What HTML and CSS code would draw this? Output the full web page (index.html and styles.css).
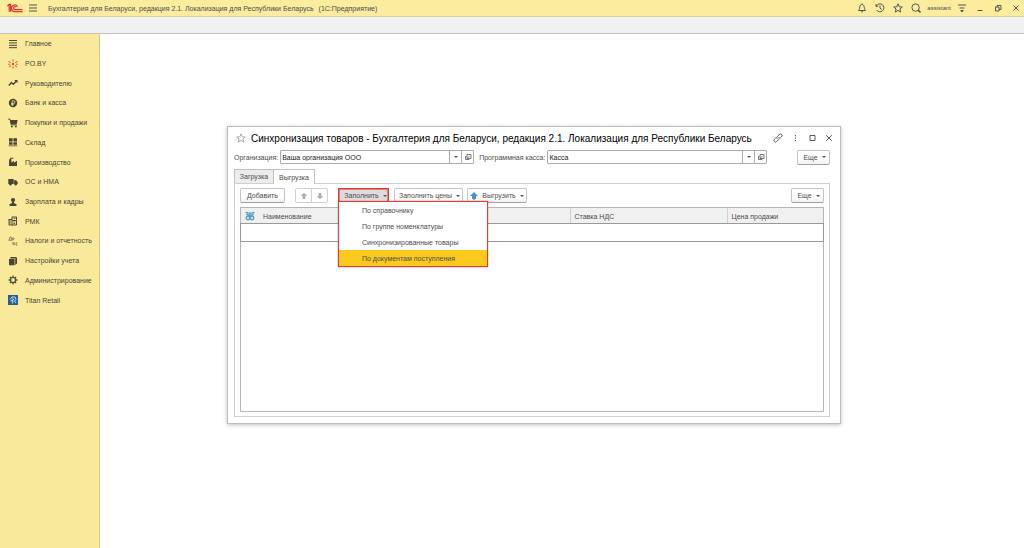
FILE: index.html
```html
<!DOCTYPE html>
<html lang="ru">
<head>
    <meta charset="utf-8">
    <title>Бухгалтерия для Беларуси</title>
    <link rel="stylesheet" href="styles.css">
</head>
<body>
    <header class="topbar">
        <svg class="logo" viewBox="0 0 16 10" fill="none" stroke="#e0352f" stroke-width="1.2">
            <path d="M0.4 3L2.2 1.4H3.6V8.8M2.2 1.8V8.8"/>
            <path d="M10.6 3.6A3.3 3.3 0 1 0 8 8.6H15.6"/>
            <path d="M9.2 4.2A1.5 1.5 0 1 0 8 6.6H15.6"/>
        </svg>
        <button class="icon-btn menu-btn" aria-label="Меню">
            <svg viewBox="0 0 10 10"><path d="M1 2h8M1 5h8M1 8h8"/></svg>
        </button>
        <span class="app-title">Бухгалтерия для Беларуси, редакция 2.1. Локализация для Республики Беларусь</span>
        <span class="app-name">(1С:Предприятие)</span>
        <div class="top-tools">
            <button class="icon-btn" aria-label="Уведомления">
                <svg viewBox="0 0 10 10"><path d="M1.5 7.5C3 6 2.5 4.5 3 3.2C3.3 2 4 1.5 5 1.5S6.7 2 7 3.2C7.5 4.5 7 6 8.5 7.5ZM4 8.8h2M5 .5v1"/></svg>
            </button>
            <button class="icon-btn" aria-label="История">
                <svg viewBox="0 0 10 10"><path d="M1.3 3A4 4 0 1 1 1.5 7M1 1v2.3h2.2M5 2.5V5.2L6.8 6.5"/></svg>
            </button>
            <button class="icon-btn" aria-label="Избранное">
                <svg viewBox="0 0 10 10"><path d="M5 .8L6.2 3.8L9.3 4L6.9 6L7.7 9.1L5 7.4L2.3 9.1L3.1 6L.7 4L3.8 3.8Z"/></svg>
            </button>
            <button class="icon-btn" aria-label="Поиск">
                <svg viewBox="0 0 10 10"><circle cx="4.6" cy="4.6" r="3.7"/><path d="M7 7l2.5 2.5" stroke-width="1.6"/></svg>
            </button>
            <span class="user">assistant</span>
            <button class="icon-btn" aria-label="Настройки">
                <svg viewBox="0 0 10 10"><path d="M1 2h8M2.5 5h5"/><path d="M3.8 7.5h2.4L5 9Z" fill="#444"/></svg>
            </button>
            <button class="icon-btn" aria-label="Свернуть">
                <svg viewBox="0 0 10 10"><path d="M2.5 7.5h5"/></svg>
            </button>
            <button class="icon-btn" aria-label="Восстановить">
                <svg viewBox="0 0 10 10"><path d="M2.5 4h3.5v4h-3.5zM4 4V2.5h4V6.500h-2"/></svg>
            </button>
            <button class="icon-btn" aria-label="Закрыть">
                <svg viewBox="0 0 10 10"><path d="M2.5 2.5l5 5M7.5 2.5l-5 5"/></svg>
            </button>
        </div>
    </header>
    <div class="open-tabs"></div>
    <div class="workspace">
        <nav class="sidebar">
            <div class="sections">
                <a href="#"><svg viewBox="0 0 10 10"><path d="M1 1.5h8M1 3.9h8M1 6.3h8M1 8.7h8" stroke="#4a4433"/></svg>Главное</a>
                <a href="#"><svg viewBox="0 0 10 10"><path d="M5 .5v2M5 7.5v2M.5 2.5l2.2 1M9.5 2.5l-2.2 1M1 8l2-1.5M9 8l-2-1.5M.3 5.2h1.7M8 5.2h1.7" stroke="#e2452f"/><circle cx="5" cy="5" r="1.2" fill="#e2452f"/></svg>PO.BY</a>
                <a href="#"><svg viewBox="0 0 10 10"><path d="M.8 7.5L3.5 4.6L5.3 6.3L8.5 3" stroke="#4a4433" stroke-width="1.4"/><path d="M6.3 2h3.2v3.2z" fill="#4a4433"/></svg>Руководителю</a>
                <a href="#"><svg viewBox="0 0 10 10"><circle cx="5" cy="5" r="4.2" fill="#4a4433"/><path d="M4.2 8V2.8h1.4a1.3 1.3 0 0 1 0 2.7H3.2M3.2 6.7h2.6" stroke="#f9ea9b" stroke-width=".8"/></svg>Банк и касса</a>
                <a href="#"><svg viewBox="0 0 10 10"><path d="M.3 1.2h1.7l1.2 5.6h5.6" stroke="#4a4433"/><path d="M2.2 2h7.5l-1 4h-5.6z" fill="#4a4433"/><circle cx="3.9" cy="8.5" r="1" fill="#4a4433"/><circle cx="7.9" cy="8.5" r="1" fill="#4a4433"/></svg>Покупки и продажи</a>
                <a href="#"><svg viewBox="0 0 10 10"><path d="M1 1.2h3.6v3.2H1zM5.4 1.2H9v3.2H5.4zM1 5.2h3.6v2.6H1zM5.4 5.2H9v2.6H5.4zM.6 8.4h8.8v.8H.6z" fill="#4a4433"/></svg>Склад</a>
                <a href="#"><svg viewBox="0 0 10 10"><path d="M1 9V4.5L1.4 2h1.8l.3 3.5L6 3.8v2L9 3.8V9z" fill="#4a4433"/><path d="M2 1.3h3.5" stroke="#4a4433"/></svg>Производство</a>
                <a href="#"><svg viewBox="0 0 10 10"><path d="M.3 2h5.4v5H.3zM6.1 3.2h2l1.6 2V7H6.1z" fill="#4a4433"/><circle cx="2.4" cy="7.3" r="1.2" fill="#4a4433"/><circle cx="7.7" cy="7.3" r="1.2" fill="#4a4433"/></svg>ОС и НМА</a>
                <a href="#"><svg viewBox="0 0 10 10"><circle cx="5" cy="3" r="2.1" fill="#4a4433"/><path d="M1.5 9V7.3L4 6V4.5h2V6l2.5 1.3V9z" fill="#4a4433"/></svg>Зарплата и кадры</a>
                <a href="#"><svg viewBox="0 0 10 10"><path d="M1 3.5h3M1 3v6h7.5V4.5H4V9M4 4.5V1h4.5v3.5" stroke="#4a4433"/><path d="M1.5 5h1.5M1.5 7h1.5M5.5 2.5h2M5.3 6h2M5.3 7.6h2" stroke="#4a4433" stroke-width=".8"/></svg>РМК</a>
                <a href="#"><svg viewBox="0 0 10 10"><path d="M1 4.2L2 1h1.3V4M.6 4.3h3.5M4.7 4.5V1.800h.7a.8.8 0 0 1 0 1.6h-.7M5 6v3.2M7 6.5L5.2 7.6L7 9M9.3 6.8H8V9h1.4" stroke="#6a634c" stroke-width=".7"/></svg>Налоги и отчетность</a>
                <a href="#"><svg viewBox="0 0 10 10"><path d="M1 3h5.6v6.2H1zM1.6 2.5L3 1h6L7.3 2.5zM7.2 3L9 1.4v6L7.2 9z" fill="#4a4433"/></svg>Настройки учета</a>
                <a href="#"><svg viewBox="0 0 10 10"><circle cx="5" cy="5" r="2.5" stroke="#4a4433" stroke-width="1.2"/><path d="M5 .6v1.6M5 7.8v1.6M.6 5h1.6M7.8 5h1.6M1.9 1.9L3 3M7 7l1.1 1.1M1.9 8.1L3 7M7 3l1.1-1.1" stroke="#4a4433" stroke-width="1.3"/></svg>Администрирование</a>
                <a href="#"><svg viewBox="0 0 10 10"><path d="M0 0h10v10H0z" fill="#28608f"/><path d="M2 4.5L4 2h3l1 2.5L6.5 6 8 8M2.5 6l2.5-.5L4.5 8.5M4 4l2 .5" stroke="#c4e2f3"/></svg>Titan Retail</a>
            </div>
        </nav>
        <main class="desktop">
            <section class="window">
                <div class="window-head">
                    <svg class="star" viewBox="0 0 10 10"><path d="M5 .8L6.2 3.8L9.3 4L6.9 6L7.7 9.1L5 7.4L2.3 9.1L3.1 6L.7 4L3.8 3.8Z"/></svg>
                    <h1>Синхронизация товаров - Бухгалтерия для Беларуси, редакция 2.1. Локализация для Республики Беларусь</h1>
                    <div class="window-tools">
                        <button class="icon-btn" aria-label="Ссылка">
                            <svg viewBox="0 0 10 10"><path d="M4.2 5.8A1.7 1.7 0 0 1 4.2 3.6L6.3 1.5A1.6 1.6 0 0 1 8.6 3.8L7.2 5.2M5.8 4.2A1.7 1.7 0 0 1 5.8 6.4L3.7 8.5A1.6 1.6 0 0 1 1.4 6.2L2.8 4.8"/></svg>
                        </button>
                        <button class="icon-btn" aria-label="Действия">
                            <svg viewBox="0 0 10 10"><path d="M5.5 2v1.3M5.5 4.5v1.3M5.5 7v1.3"/></svg>
                        </button>
                        <button class="icon-btn" aria-label="Развернуть">
                            <svg viewBox="0 0 10 10"><path d="M3 2.5h5v5H3z"/></svg>
                        </button>
                        <button class="icon-btn" aria-label="Закрыть окно">
                            <svg viewBox="0 0 10 10"><path d="M2.2 2.2l5.6 5.6M7.8 2.2l-5.6 5.6"/></svg>
                        </button>
                    </div>
                </div>
                <div class="filters">
                    <label for="org">Организация:</label>
                    <div class="combo combo-org">
                        <input type="text" id="org" value="Ваша организация ООО">
                        <button aria-label="Выбрать организацию"><i class="caret"></i></button>
                        <button aria-label="Открыть организацию"><svg viewBox="0 0 8 8"><path d="M3 1.5h4v4H3zM2.5 3.5H1.5v3h3.5V6M3.5 5L5.5 3"/></svg></button>
                    </div>
                    <label for="kassa">Программная касса:</label>
                    <div class="combo combo-kassa">
                        <input type="text" id="kassa" value="Касса">
                        <button aria-label="Выбрать кассу"><i class="caret"></i></button>
                        <button aria-label="Открыть кассу"><svg viewBox="0 0 8 8"><path d="M3 1.5h4v4H3zM2.5 3.5H1.5v3h3.5V6M3.5 5L5.5 3"/></svg></button>
                    </div>
                    <button class="btn more">Еще <i class="caret"></i></button>
                </div>
                <div class="tabs">
                    <button class="tab">Загрузка</button>
                    <button class="tab active">Выгрузка</button>
                </div>
                <div class="panel">
                    <div class="commands">
                        <button class="btn btn-add">Добавить</button>
                        <div class="btn-pair">
                            <button aria-label="Вверх"><svg viewBox="0 0 8 8"><path d="M4 .8L7.2 4H5.3v3H2.7V4H.8z" fill="#a9adb3"/></svg></button>
                            <button aria-label="Вниз"><svg viewBox="0 0 8 8"><path d="M4 7.2L.8 4h1.9V1h2.6v3h1.9z" fill="#a9adb3"/></svg></button>
                        </div>
                        <div class="dropdown">
                            <button class="btn btn-fill">Заполнить <i class="caret"></i></button>
                            <div class="dropdown-menu">
                                <button>По справочнику</button>
                                <button>По группе номенклатуры</button>
                                <button>Синхронизированные товары</button>
                                <button class="selected">По документам поступления</button>
                            </div>
                        </div>
                        <button class="btn btn-prices">Заполнить цены <i class="caret"></i></button>
                        <button class="btn btn-export">
                            <svg viewBox="0 0 8 8"><path d="M4 0L8 4H6v2.500L4 8L2 6.500V4H0z" fill="#4a93c4"/></svg>
                            Выгрузить <i class="caret"></i>
                        </button>
                        <button class="btn more">Еще <i class="caret"></i></button>
                    </div>
                    <div class="grid">
                        <table>
                            <colgroup>
                                <col class="col-icon">
                                <col>
                                <col class="col-vat">
                                <col class="col-price">
                            </colgroup>
                            <thead>
                                <tr>
                                    <th><svg viewBox="0 0 10 10"><path d="M1 1.500h8v3H1z" fill="#8fc4e0"/><path d="M.5 1.5h2.500M7 1.5h2.500M5 1v3.5M2 3.5L5 5l3-1.500" stroke="#4a7f9c" stroke-width=".8"/><circle cx="3" cy="7" r="2" fill="#b9ddef" stroke="#3985b3"/><circle cx="7" cy="7" r="2" fill="#b9ddef" stroke="#3985b3"/></svg></th>
                                    <th>Наименование</th>
                                    <th class="split">Ставка НДС</th>
                                    <th class="split">Цена продажи</th>
                                </tr>
                            </thead>
                            <tbody>
                                <tr><td></td><td></td><td></td><td></td></tr>
                            </tbody>
                        </table>
                    </div>
                </div>
            </section>
        </main>
    </div>
</body>
</html>
```
FILE: styles.css
```css
* {
    box-sizing: border-box;
}
body {
    margin: 0;
    height: 100vh;
    display: flex;
    flex-direction: column;
    font-family: "Liberation Sans", Arial, sans-serif;
    font-size: 7px;
    color: #4c4c4c;
    background: #fff;
}
button, input {
    font: inherit;
    color: inherit;
    margin: 0;
    padding: 0;
    border: none;
    background: none;
}
svg {
    fill: none;
    flex: none;
}
.topbar {
    display: flex;
    align-items: center;
    height: 17px;
    padding: 0 3px 0 7px;
    background: #fbec9e;
    border-bottom: 1px solid #d8cf9c;
}
.logo {
    width: 16px;
    height: 10px;
}
.icon-btn {
    display: flex;
    align-items: center;
    justify-content: center;
}
.icon-btn svg {
    width: 10px;
    height: 10px;
    stroke: #555;
}
.menu-btn {
    margin: 0 10px 0 5px;
}
.app-name {
    margin-left: 5px;
}
.top-tools {
    display: flex;
    align-items: center;
    gap: 8px;
    margin-left: auto;
}
.user {
    margin: 0 -2px;
    font-size: 6px;
}
.open-tabs {
    height: 17px;
    background: #f0f0f0;
    border-bottom: 1px solid #c3c3c3;
}
.workspace {
    flex: 1;
    display: flex;
    min-height: 0;
}
.sidebar {
    width: 100px;
    background: #f9ea9b;
    border-right: 1px solid #cfc69a;
}
.sections {
    display: grid;
    grid-auto-rows: 1fr;
    height: 276px;
}
.sections a {
    display: flex;
    align-items: center;
    gap: 7px;
    padding-left: 8px;
    color: #4a4433;
    text-decoration: none;
    white-space: nowrap;
}
.sections svg {
    width: 10px;
    height: 10px;
}
.desktop {
    flex: 1;
    position: relative;
}
.window {
    position: absolute;
    top: 92px;
    right: 183px;
    bottom: 124px;
    left: 127px;
    display: flex;
    flex-direction: column;
    padding: 0 10px 6px 6px;
    background: #fff;
    border: 1px solid #bdbdbd;
    box-shadow: 0 1px 4px rgba(0, 0, 0, 0.25);
}
.window-head {
    display: flex;
    align-items: center;
    height: 23px;
    padding-bottom: 1px;
}
.star {
    width: 10px;
    height: 10px;
    margin: 0 5px 0 2px;
    stroke: #aaa;
}
h1 {
    margin: 0;
    font-size: 10px;
    font-weight: normal;
    color: #000;
    white-space: nowrap;
}
.window-tools {
    display: flex;
    gap: 7px;
    margin-left: auto;
    margin-right: -4px;
}
.filters {
    display: flex;
    align-items: center;
    height: 14px;
}
.filters label {
    white-space: nowrap;
}
.combo {
    display: flex;
    height: 14px;
    border: 1px solid #adadad;
    border-radius: 1px;
}
.combo-org {
    width: 194px;
    margin: 0 5px 0 2px;
}
.combo-kassa {
    width: 220px;
    margin-left: 2px;
}
.combo input {
    flex: 1;
    min-width: 0;
    padding-left: 1px;
    color: #222;
}
.combo button {
    width: 12px;
    border-left: 1px solid #adadad;
    display: flex;
    align-items: center;
    justify-content: center;
}
.combo svg {
    width: 8px;
    height: 8px;
    stroke: #777;
}
.caret {
    display: inline-block;
    border: 2px solid transparent;
    border-top-color: #555;
    border-bottom: none;
}
.btn {
    display: flex;
    align-items: center;
    justify-content: center;
    gap: 4px;
    height: 15px;
    white-space: nowrap;
    background: linear-gradient(#fff 60%, #f0f0f0);
    border: 1px solid #c4c4c4;
    border-bottom-color: #a0a0a0;
    border-radius: 2px;
}
.more {
    width: 33px;
    margin-left: auto;
    padding-left: 2px;
}
.tabs {
    display: flex;
    margin-top: 5px;
}
.tab {
    width: 40px;
    height: 14px;
    background: #ececec;
    border: 1px solid #c0c0c0;
    border-bottom: none;
}
.tab.active {
    width: 42px;
    height: 15px;
    margin: 0 0 -1px -1px;
    background: #fff;
    position: relative;
}
.panel {
    flex: 1;
    display: flex;
    flex-direction: column;
    padding: 4px 5px;
    border: 1px solid #d0d0d0;
}
.commands {
    display: flex;
    height: 15px;
    margin-bottom: 4px;
}
.btn-add {
    width: 45px;
}
.btn-pair {
    display: flex;
    width: 33px;
    margin: 0 10px;
    border: 1px solid #d0d0d0;
    border-radius: 2px;
}
.btn-pair button {
    flex: 1;
    display: flex;
    align-items: center;
    justify-content: center;
}
.btn-pair button + button {
    border-left: 1px solid #d0d0d0;
}
.btn-pair svg, .btn-export svg {
    width: 8px;
    height: 8px;
}
.dropdown {
    position: relative;
}
.btn-fill {
    width: 51px;
    padding-left: 4px;
    background: #dcdcdc;
    border: 1px solid #e53935;
    border-radius: 0;
    box-shadow: inset 0 0 0 1px #e0807c;
}
.dropdown-menu {
    position: absolute;
    top: 13px;
    left: 0;
    z-index: 1;
    width: 150px;
    background: #fff;
    border: 1px solid #e53935;
    box-shadow: 0 0 1px #e53935;
}
.dropdown-menu button {
    display: block;
    width: 100%;
    height: 16px;
    padding-left: 23px;
    text-align: left;
}
.dropdown-menu .selected {
    background: #fcca1f;
}
.btn-prices {
    width: 69px;
    margin: 0 4px 0 5px;
    padding-left: 2px;
}
.btn-export {
    width: 60px;
}
.grid {
    flex: 1;
    border: 1px solid #b5b5b5;
}
table {
    width: 100%;
    table-layout: fixed;
    border-collapse: collapse;
}
.col-icon {
    width: 18px;
}
.col-vat {
    width: 157px;
}
.col-price {
    width: 96px;
}
th {
    height: 16px;
    padding: 0 4px;
    font-weight: normal;
    text-align: left;
    background: #f0f0f0;
}
th svg {
    display: block;
    width: 10px;
    height: 10px;
}
th.split {
    border-left: 1px solid #d0d0d0;
}
td {
    height: 17px;
    padding: 0;
}
tbody tr {
    outline: 1px solid #999;
}
```
